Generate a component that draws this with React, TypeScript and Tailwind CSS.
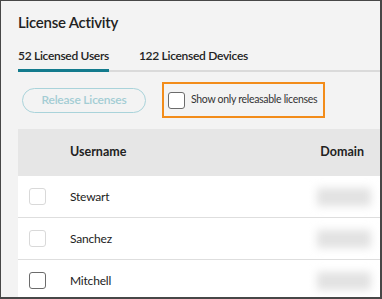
import React from 'react';

const users = ['Stewart', 'Sanchez', 'Mitchell'];

function Box({ dark }: { dark?: boolean }) {
  return (
    <div
      className={`shrink-0 w-[17px] h-[17px] rounded-[3px] bg-white border ${
        dark ? 'border-[#6b6b6b] border-[1.5px]' : 'border-[#d9d9d9]'
      }`}
    />
  );
}

export default function App() {
  return (
    <div
      className="w-[382px] h-[299px] overflow-hidden bg-[#f3f3f3] border-l border-t border-r-2 border-b-2 border-[#474747] text-[#222] whitespace-nowrap"
      style={{ fontFamily: 'Lato, "Liberation Sans", sans-serif' }}
    >
      <div className="pl-[17px] pt-[11px]">
        <h1 className="text-[15px] leading-[20px] font-semibold tracking-[-0.25px]">License Activity</h1>

        <div className="mt-[16px] flex gap-[30px] border-b-2 border-[#dadada] text-[12px] leading-[16px] font-semibold tracking-[-0.3px]">
          <div className="pb-[5px] -mb-[2px] border-b-[3px] border-[#137b8d]">52 Licensed Users</div>
          <div className="pb-[5px]">122 Licensed Devices</div>
        </div>

        <div className="mt-[10px] flex items-center">
          <button className="ml-[4px] w-[124px] h-[25px] rounded-full border-[1.5px] border-[#a9d3da] text-[#a3cdd4] text-[12px] font-semibold tracking-[-0.2px]">
            Release Licenses
          </button>
          <div className="ml-[16px] w-[163px] h-[36px] border-2 border-[#f28c1a] flex items-center pl-[4px]">
            <Box dark />
            <span className="ml-[6px] text-[10.5px] tracking-[-0.3px] text-[#333]">Show only releasable licenses</span>
          </div>
        </div>

        <div className="mt-[11px]">
          <div className="h-[47px] bg-[#e6e6e6] flex items-center text-[12.5px] font-bold">
            <span className="ml-[52px]">Username</span>
            <span className="ml-auto mr-[16px]">Domain</span>
          </div>
          {users.map((u, i) => (
            <div key={u} className="h-[42px] bg-white border-b border-[#dedede] flex items-center">
              <div className="ml-[11px]">
                <Box dark={i === 2} />
              </div>
              <span className="ml-[24px] text-[12px] tracking-[-0.2px]">{u}</span>
              <div className="ml-auto mr-[9px] w-[54px] h-[18px] bg-[#e2e2e2] blur-[4px]" />
            </div>
          ))}
        </div>
      </div>
    </div>
  );
}
